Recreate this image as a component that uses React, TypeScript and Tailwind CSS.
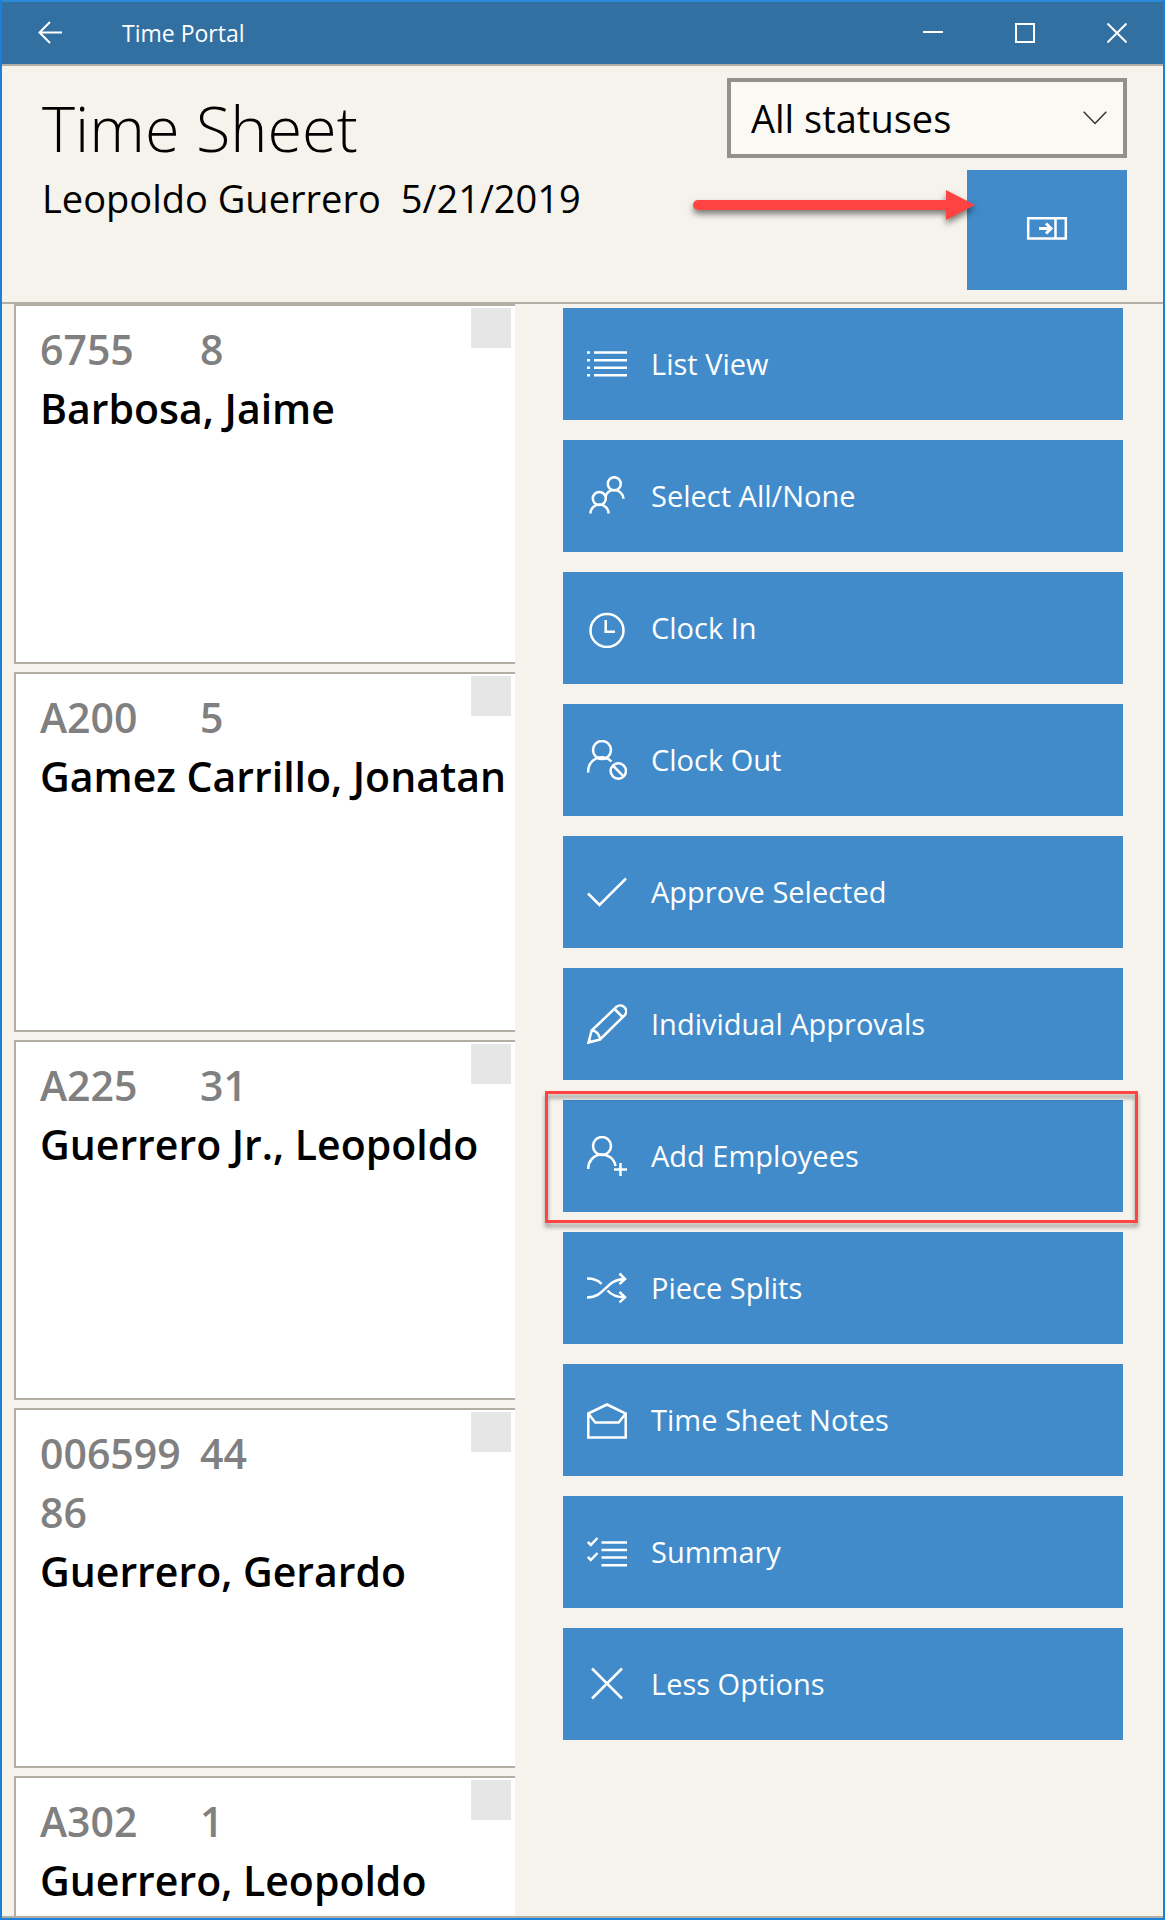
import type { ReactNode } from 'react'

type Employee = {
  code: string
  count: string
  name: string
}

type Action = {
  label: string
  icon: ReactNode
  highlighted?: boolean
}

const EMPLOYEES: Employee[] = [
  { code: '6755', count: '8', name: 'Barbosa, Jaime' },
  { code: 'A200', count: '5', name: 'Gamez Carrillo, Jonatan' },
  { code: 'A225', count: '31', name: 'Guerrero Jr., Leopoldo' },
  { code: '00659986', count: '44', name: 'Guerrero, Gerardo' },
  { code: 'A302', count: '1', name: 'Guerrero, Leopoldo' },
]

function Icon({ children }: { children: ReactNode }) {
  return (
    <svg viewBox="0 0 40 40" fill="none" stroke="currentColor" strokeWidth="2.5" className="size-10 shrink-0" aria-hidden="true">
      {children}
    </svg>
  )
}

const ACTIONS: Action[] = [
  {
    label: 'List View',
    icon: (
      <Icon>
        <path d="M0 8.5h3M0 16.2h3M0 23.8h3M0 31.3h3M7 8.5h33M7 16.2h33M7 23.8h33M7 31.3h33" />
      </Icon>
    ),
  },
  {
    label: 'Select All/None',
    icon: (
      <Icon>
        <circle cx="27.3" cy="7.7" r="6.5" />
        <circle cx="12.3" cy="22.5" r="6.5" />
        <path d="M3.5 37.5a9 9 0 0 1 18 0" />
        <path d="M18.5 20.5c1-3.8 4.5-6.5 8.8-6.500a9.200 9.200 0 0 1 9.200 8.800" />
      </Icon>
    ),
  },
  {
    label: 'Clock In',
    icon: (
      <Icon>
        <circle cx="20" cy="22.5" r="16.5" />
        <path d="M18.7 12v11.700h9.300" />
      </Icon>
    ),
  },
  {
    label: 'Clock Out',
    icon: (
      <Icon>
        <circle cx="15" cy="10" r="9" />
        <path d="M1.300 32.500A13.500 13.500 0 0 1 24.500 21.500" />
        <circle cx="31.3" cy="31" r="7.7" />
        <path d="M26 25.700l10.600 10.600" />
      </Icon>
    ),
  },
  {
    label: 'Approve Selected',
    icon: (
      <Icon>
        <path d="M1 21.500l11.500 11.500L39 6.500" />
      </Icon>
    ),
  },
  {
    label: 'Individual Approvals',
    icon: (
      <Icon>
        <path d="M1.500 38.500l3.200-12L29.500 2.800a5.900 5.900 0 0 1 8.300 8.300L13 35.500zM27.500 5l8 8M4.700 26.500c4.500 0 8 4 8.300 9" />
        <path d="M.5 39.500l1.500-5 4 3.500z" fill="currentColor" stroke="none" />
      </Icon>
    ),
  },
  {
    label: 'Add Employees',
    highlighted: true,
    icon: (
      <Icon>
        <circle cx="15" cy="10" r="9" />
        <path d="M1.300 33a13.700 13.700 0 0 1 27.200-3M27 33.500h13M33.500 27v13" />
      </Icon>
    ),
  },
  {
    label: 'Piece Splits',
    icon: (
      <Icon>
        <path d="M0 10.500c6 0 11.500 2 14.500 5.500M0 29.500c19 0 18-18.500 38-18.500M20.500 22.500c4 4.500 9 6.800 17 6.800M32.500 5.500l5.500 5.500-5.500 5M32.500 24l5.500 5.300-5.500 5" />
      </Icon>
    ),
  },
  {
    label: 'Time Sheet Notes',
    icon: (
      <Icon>
        <path d="M1.300 13.500L20 4.500l18.700 9v24H1.300zM1.300 13.500l7 9h23.400l7-9" />
      </Icon>
    ),
  },
  {
    label: 'Summary',
    icon: (
      <Icon>
        <path d="M.8 10l3 3L10.500 6M.8 25l3 3 6.700-7M14.500 10.500H40M14.500 18H40M14.500 25.500H40M14.500 33.300H40" />
      </Icon>
    ),
  },
  {
    label: 'Less Options',
    icon: (
      <Icon>
        <path d="M5 4.500l30 30M35 4.500l-30 30" />
      </Icon>
    ),
  },
]

function TitleBar() {
  return (
    <div className="flex h-16 shrink-0 items-stretch border-t-2 border-t-[#2a8ad8] bg-[#3270a2] text-white">
      <button type="button" aria-label="Back" className="flex w-24 items-center justify-center">
        <svg viewBox="0 0 24 24" fill="none" stroke="currentColor" strokeWidth="2" className="size-6" aria-hidden="true">
          <path d="M24 11.500H1.500M12 1L1.500 11.500 12 22" />
        </svg>
      </button>
      <span className="flex flex-1 items-center pl-6 text-[23px]">Time Portal</span>
      <button type="button" aria-label="Minimize" className="flex w-[92px] items-center justify-center">
        <svg viewBox="0 0 20 20" fill="none" stroke="currentColor" strokeWidth="2" className="size-5" aria-hidden="true">
          <path d="M0 9h20" />
        </svg>
      </button>
      <button type="button" aria-label="Maximize" className="flex w-[92px] items-center justify-center">
        <svg viewBox="0 0 20 20" fill="none" stroke="currentColor" strokeWidth="2" className="size-5" aria-hidden="true">
          <path d="M1 1h18v18H1z" />
        </svg>
      </button>
      <button type="button" aria-label="Close" className="flex w-[92px] items-center justify-center">
        <svg viewBox="0 0 20 20" fill="none" stroke="currentColor" strokeWidth="2" className="size-5" aria-hidden="true">
          <path d="M.5.5l19 19M19.500.5l-19 19" />
        </svg>
      </button>
    </div>
  )
}

function Header() {
  return (
    <header className="flex shrink-0 justify-between border-y-2 border-[#b3afa7] py-3 pr-9 pl-10">
      <div className="pt-2">
        <h1 className="text-[63px] leading-[84px] font-light">Time Sheet</h1>
        <p className="flex gap-5 text-[38px] leading-[56px]">
          <span>Leopoldo Guerrero</span>
          <span>5/21/2019</span>
        </p>
      </div>
      <div className="flex flex-col items-end gap-3">
        <div className="relative">
          <select
            aria-label="Status"
            className="h-20 w-[400px] appearance-none border-4 border-[#92918b] bg-[#faf9f4] px-5 text-[38px] leading-[56px] text-black"
          >
            <option>All statuses</option>
          </select>
          <svg
            viewBox="0 0 24 14"
            fill="none"
            stroke="#333333"
            strokeWidth="1.5"
            className="pointer-events-none absolute top-[33px] right-5 h-[14px] w-6"
            aria-hidden="true"
          >
            <path d="M.7.7L12 12.500 23.300.7" />
          </svg>
        </div>
        <div className="relative">
          <button type="button" aria-label="Toggle options" className="flex h-[120px] w-40 items-center justify-center bg-[#418bca] text-white">
            <svg viewBox="0 2 40 24" fill="none" stroke="currentColor" strokeWidth="2.5" className="h-6 w-10 overflow-visible" aria-hidden="true">
              <path d="M1.200 2.200h37.600v20.300H1.200zM28.500 2v21" />
              <path d="M12 12.500h12.500M19 7.500l5 5-5 5" strokeWidth="3" />
            </svg>
          </button>
          {/* callout arrow, tip overlaps the button edge */}
          <svg
            viewBox="0 0 282 30"
            className="pointer-events-none absolute top-5 -right-2 mr-40 h-[30px] w-[282px] overflow-visible drop-shadow-[0_4px_3px_rgba(0,0,0,0.5)]"
            aria-hidden="true"
          >
            <path d="M5 10H253V0l29 15-29 15V20H5a5 5 0 0 1 0-10z" fill="#ff4343" />
          </svg>
        </div>
      </div>
    </header>
  )
}

function EmployeeCard({ employee }: { employee: Employee }) {
  return (
    <li className="relative h-[360px] shrink-0 overflow-hidden border-2 border-r-0 border-[#b3afa7] bg-white pt-[14px] pl-6 text-[41px] leading-[59px] font-semibold">
      <div className="flex text-[#808080]">
        <span className="w-40 break-all">{employee.code}</span>
        <span>{employee.count}</span>
      </div>
      <p className="whitespace-nowrap text-black">{employee.name}</p>
      <input
        type="checkbox"
        aria-label={`Select ${employee.name}`}
        className="absolute top-0.5 right-1 size-10 appearance-none bg-[#e6e6e6] checked:bg-[#418bca]"
      />
    </li>
  )
}

function ActionButton({ action }: { action: Action }) {
  return (
    <li className="relative">
      <button type="button" className="flex h-28 w-full items-center gap-6 bg-[#418bca] px-6 text-left text-[29px] text-white">
        {action.icon}
        {action.label}
      </button>
      {action.highlighted && (
        <span className="pointer-events-none absolute -top-[9px] -right-[15px] -bottom-[11px] -left-[18px] border-3 border-[#ff4343] drop-shadow-[0_4px_2px_rgba(0,0,0,0.4)]" />
      )}
    </li>
  )
}

export default function App() {
  return (
    <div className="flex h-screen flex-col overflow-hidden border-x-2 border-b-2 border-[#1a80d8] bg-[#f5f3eb] font-['Open_Sans','Segoe_UI',sans-serif] text-black">
      <TitleBar />
      <Header />
      <main className="grid min-h-0 flex-1 grid-cols-[501fr_560fr] gap-12 overflow-hidden border-b-2 border-[#b3afa7] pr-10 pl-3">
        <ul className="flex min-w-0 flex-col gap-2">
          {EMPLOYEES.map((employee) => (
            <EmployeeCard key={employee.code} employee={employee} />
          ))}
        </ul>
        <ul className="flex min-w-0 flex-col gap-5 pt-1">
          {ACTIONS.map((action) => (
            <ActionButton key={action.label} action={action} />
          ))}
        </ul>
      </main>
    </div>
  )
}
